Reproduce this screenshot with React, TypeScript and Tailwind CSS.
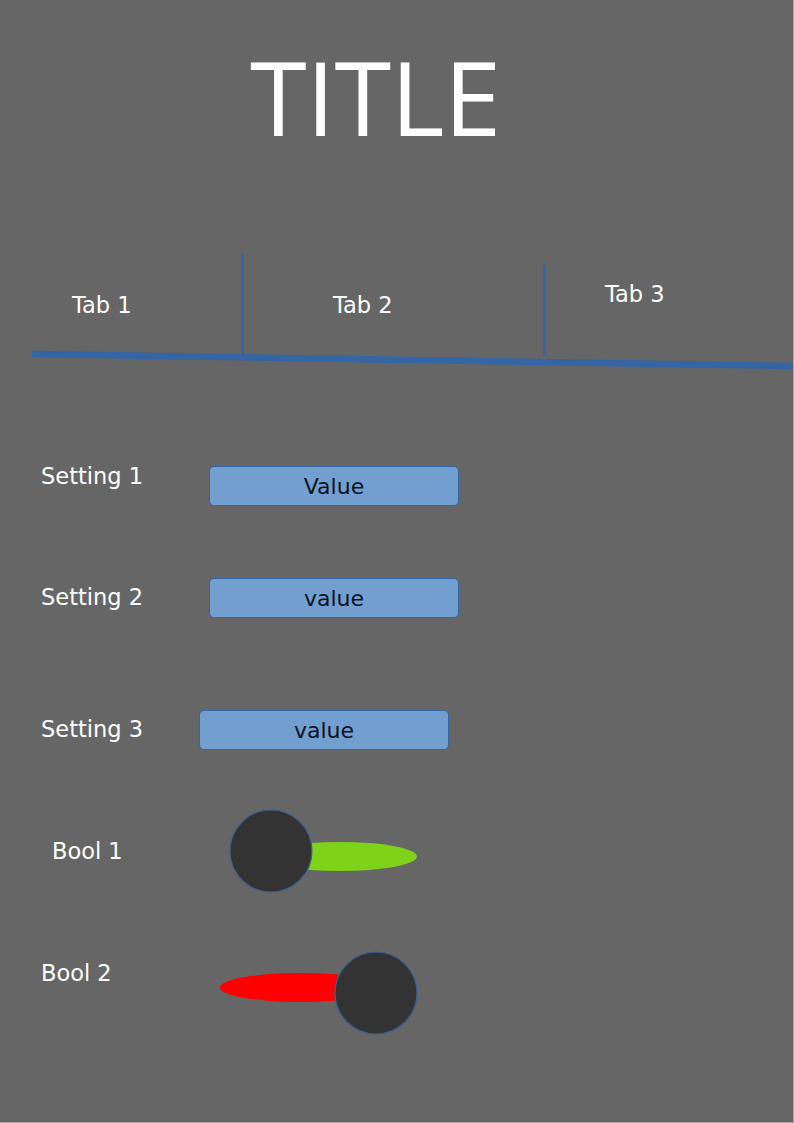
import React from "react";

const sans = "font-['DejaVu_Sans',sans-serif]";

function SettingBox({ value }: { value: string }) {
    return (
        <div className="w-[250px] h-[40px] rounded-[5px] bg-[#729fcf] border border-[#3465a4] flex items-center justify-center text-[22px] text-[#0c1424]">
            {value}
        </div>
    );
}

function Toggle({ on }: { on: boolean }) {
    // drawn switch: knob + stretched ellipse track
    if (on) {
        return (
            <svg width="190" height="86" viewBox="0 0 190 86">
                <ellipse cx="111" cy="47.5" rx="77" ry="14.5" fill="#7ed31a" />
                <circle cx="42" cy="42" r="41" fill="#333333" stroke="#3d5f8f" strokeWidth="1.2" />
            </svg>
        );
    }
    return (
        <svg width="200" height="86" viewBox="0 0 200 86">
            <ellipse cx="81" cy="36.5" rx="80" ry="14.5" fill="#ff0000" />
            <circle cx="157" cy="42" r="41" fill="#333333" stroke="#3d5f8f" strokeWidth="1.2" />
        </svg>
    );
}

export default function App() {
    return (
        <div className={`w-[794px] h-[1123px] bg-[#666666] border-r border-b border-[#a9a9a9] text-white ${sans} overflow-hidden`}>

            {/* Title */}
            <div className="pt-[45px] pl-[250px]">
                <h1 className="font-['Open_Sans',sans-serif] text-[103px] leading-none tracking-[-0.5px] font-normal">
                    TITLE
                </h1>
            </div>

            {/* Tabs */}
            <div className="mt-[106px] pl-[32px] flex h-[100px] text-[22.5px]">
                <div className="w-[209px] pl-[40px] pt-[3px] flex items-center">Tab 1</div>
                <div className="w-[302px] pl-[89px] pt-[3px] border-l-[3px] border-[#3465a4] flex items-center">Tab 2</div>
                <div className="mt-[10px] h-[92px] pl-[59px] pt-[14px] border-l-[3px] border-[#3465a4]">Tab 3</div>
            </div>
            <svg width="794" height="24" viewBox="0 0 794 24" className="block -mt-[6px]">
                <line x1="32" y1="6" x2="794" y2="18" stroke="#3465a4" strokeWidth="6.5" />
            </svg>

            {/* Settings */}
            <div className="pl-[41px] text-[22.5px]">
                <div className="mt-[88px] flex items-start">
                    <span className="w-[168px]">Setting 1</span>
                    <div className="mt-[6px]">
                        <SettingBox value="Value" />
                    </div>
                </div>

                <div className="mt-[72px] flex items-center">
                    <span className="w-[168px]">Setting 2</span>
                    <SettingBox value="value" />
                </div>

                <div className="mt-[92px] flex items-center">
                    <span className="w-[158px]">Setting 3</span>
                    <SettingBox value="value" />
                </div>

                <div className="mt-[59px] flex items-center">
                    <span className="ml-[11px] w-[177px]">Bool 1</span>
                    <Toggle on={true} />
                </div>

                <div className="mt-[56px] flex items-start">
                    <span className="mt-[6px] w-[178px]">Bool 2</span>
                    <Toggle on={false} />
                </div>
            </div>

        </div>
    );
}
